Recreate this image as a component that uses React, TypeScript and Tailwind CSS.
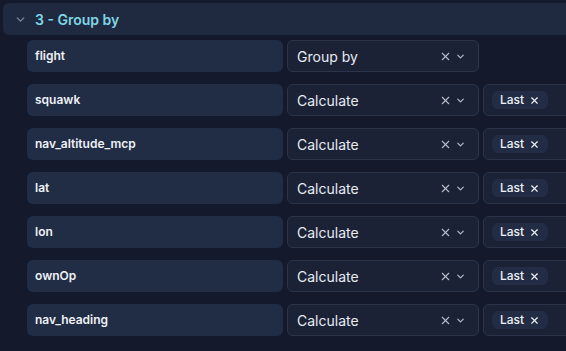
import { ChevronDown, X } from "lucide-react";

const rows = [
  { field: "flight", op: "Group by", agg: false },
  { field: "squawk", op: "Calculate", agg: true },
  { field: "nav_altitude_mcp", op: "Calculate", agg: true },
  { field: "lat", op: "Calculate", agg: true },
  { field: "lon", op: "Calculate", agg: true },
  { field: "ownOp", op: "Calculate", agg: true },
  { field: "nav_heading", op: "Calculate", agg: true },
];

const App = () => {
  return (
    <div
      className="w-[566px] h-[351px] overflow-hidden bg-[#141a2c] pt-[3px] pl-[3px]"
      style={{ fontFamily: "Inter, 'Liberation Sans', sans-serif" }}
    >
      {/* header */}
      <div className="h-[32px] w-[600px] rounded-md bg-[#1f2940] flex items-center">
        <ChevronDown className="ml-[11px] w-[13px] h-[13px] text-[#7c869c]" strokeWidth={2.5} />
        <p className="ml-[8px] text-[14px] font-semibold text-[#7fd6e4]">3 - Group by</p>
      </div>

      <div className="mt-[5px] ml-[24px] flex flex-col gap-[12px]">
        {rows.map((r) => (
          <div key={r.field} className="flex gap-[4px] h-[32px]">
            <div className="w-[256px] shrink-0 rounded-md bg-[#212c45] flex items-center pl-[8px]">
              <p className="text-[12px] font-semibold text-[#eef1f6]">{r.field}</p>
            </div>
            <div className="w-[192px] shrink-0 rounded-md bg-[#1b2236] border border-[#2b3449] flex items-center pl-[9px] pr-[12px]">
              <p className="flex-1 text-[14px] text-[#e8ebf1]">{r.op}</p>
              <X className="w-[13px] h-[13px] text-[#b8bfcc]" strokeWidth={2} />
              <ChevronDown className="ml-[3px] w-[11px] h-[11px] text-[#b8bfcc]" strokeWidth={2.5} />
            </div>
            {r.agg && (
              <div className="w-[120px] shrink-0 rounded-md bg-[#1b2236] border border-[#2b3449] flex items-center pl-[8px]">
                <div className="h-[18px] rounded-md bg-[#222c44] flex items-center gap-[5px] px-[8px]">
                  <span className="text-[12px] font-medium text-[#eef1f6]">Last</span>
                  <X className="w-[11px] h-[11px] text-[#eef1f6]" strokeWidth={2.5} />
                </div>
              </div>
            )}
          </div>
        ))}
      </div>
    </div>
  );
};

export default App;
